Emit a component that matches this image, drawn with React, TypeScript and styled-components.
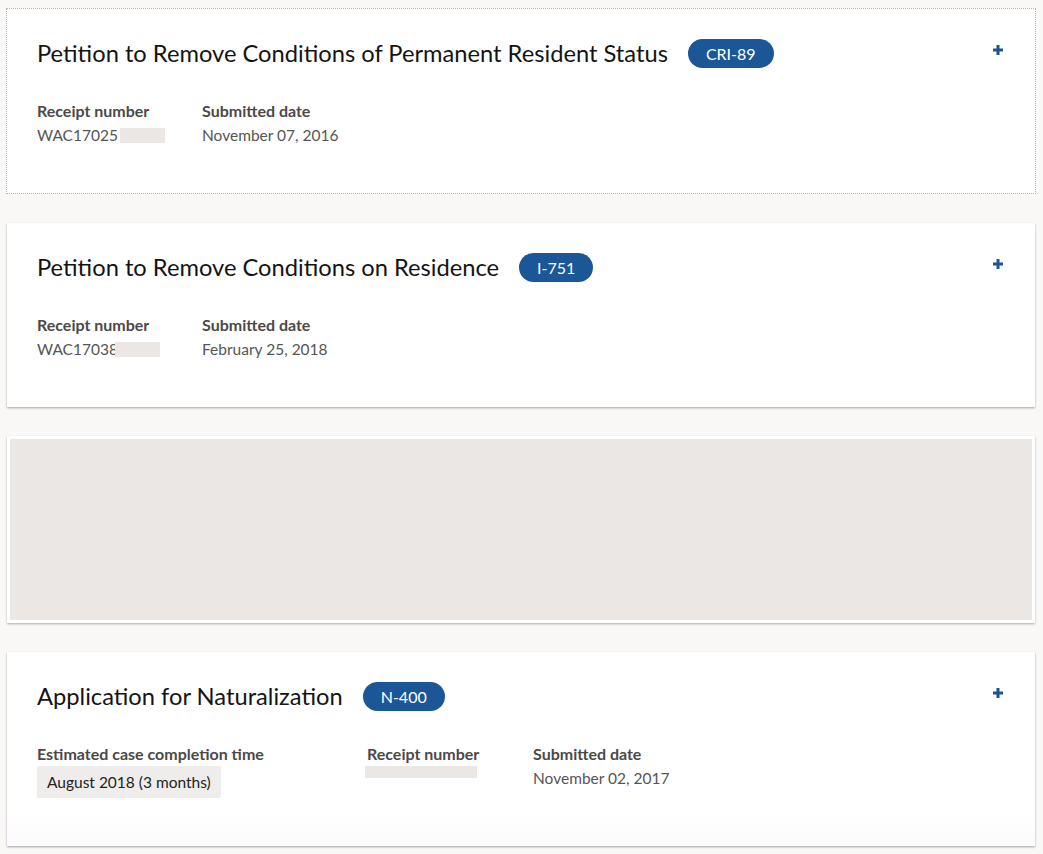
import * as React from 'react'
import styled, { createGlobalStyle } from 'styled-components'

const GlobalStyle = createGlobalStyle`
  html, body {
    margin: 0;
    padding: 0;
    background: #f9f8f6;
    font-family: Lato, "Noto Sans", "Liberation Sans", sans-serif;
  }
`

const Page = styled.div`
  display: flex;
  flex-direction: column;
  gap: 29px;
  padding: 8px 8px 6px 7px;
`

const Card = styled.section<{ $focused?: boolean; $fade?: boolean }>`
  background: ${(p) => (p.$fade ? 'linear-gradient(to bottom, #fff 80%, #fbfbfd 100%)' : '#fff')};
  padding: 30px 31px ${(p) => (p.$fade ? 48 : 46)}px 30px;
  box-shadow: ${(p) => (p.$focused ? 'none' : '0 1px 2px rgba(0, 0, 0, 0.35)')};
  border: ${(p) => (p.$focused ? '1px dotted #b8b4b0' : 'none')};
  margin: ${(p) => (p.$focused ? '0 -1px' : '0')};
`

const Placeholder = styled.div`
  height: 181px;
  background: #ebe7e4;
  border: 3px solid #fff;
  box-shadow: 0 1px 2px rgba(0, 0, 0, 0.3);
`

const Header = styled.div`
  display: flex;
  align-items: center;
  height: 28px;
  margin-bottom: 34px;
`

const Title = styled.h2`
  margin: 0;
  font-size: 23.7px;
  font-weight: 400;
  color: #141414;
  line-height: 28px;
`

const Badge = styled.span`
  display: inline-flex;
  align-items: center;
  height: 29px;
  margin-left: 20px;
  padding: 0 18px;
  border-radius: 15px;
  background: #1b5697;
  color: #fff;
  font-size: 16px;
`

const Toggle = styled.button`
  margin-left: auto;
  border: none;
  background: none;
  padding: 0;
  width: 12px;
  height: 12px;
  display: flex;
  cursor: pointer;
  margin-top: -6px;
`

const Fields = styled.div<{ $cols: string }>`
  display: grid;
  grid-template-columns: ${(p) => p.$cols};
  align-items: start;
`

const Field = styled.div`
  display: flex;
  flex-direction: column;
`

const Label = styled.div`
  font-size: 16px;
  font-weight: 700;
  color: #4d4847;
  line-height: 20px;
  margin-bottom: 2px;
`

const Value = styled.div<{ $shift?: number }>`
  font-size: 15.5px;
  color: #555;
  line-height: 24px;
  display: flex;
  align-items: center;
  margin-left: ${(p) => p.$shift ?? 0}px;
`

const Redacted = styled.span<{ $w: number; $h?: number; $gap?: number }>`
  display: inline-block;
  width: ${(p) => p.$w}px;
  height: ${(p) => p.$h ?? 15}px;
  margin-left: ${(p) => p.$gap ?? 0}px;
  background: #ebe7e4;
`

const Estimate = styled.span`
  display: inline-block;
  padding: 4px 10px;
  line-height: 24px;
  height: 32px;
  box-sizing: border-box;
  background: #efedeb;
  color: #222;
  border-radius: 2px;
`

const Plus = () => (
  <svg width="12" height="12" viewBox="0 0 12 12">
    <path d="M6 1v10M1 6h10" stroke="#1d5495" strokeWidth="3" />
  </svg>
)

type CaseProps = {
  title: string
  badge: string
  focused?: boolean
  fade?: boolean
  cols: string
  children: React.ReactNode
}

const CaseCard = ({ title, badge, focused, fade, cols, children }: CaseProps) => (
  <Card $focused={focused} $fade={fade}>
    <Header>
      <Title>{title}</Title>
      <Badge>{badge}</Badge>
      <Toggle aria-label="Expand">
        <Plus />
      </Toggle>
    </Header>
    <Fields $cols={cols}>{children}</Fields>
  </Card>
)

export default function App() {
  return (
    <Page>
      <GlobalStyle />
      <CaseCard
        focused
        title="Petition to Remove Conditions of Permanent Resident Status"
        badge="CRI-89"
        cols="165px 1fr"
      >
        <Field>
          <Label>Receipt number</Label>
          <Value>
            WAC17025<Redacted $w={45} $gap={2} />
          </Value>
        </Field>
        <Field>
          <Label>Submitted date</Label>
          <Value>November 07, 2016</Value>
        </Field>
      </CaseCard>

      <CaseCard title="Petition to Remove Conditions on Residence" badge="I-751" cols="165px 1fr">
        <Field>
          <Label>Receipt number</Label>
          <Value>
            WAC17038<Redacted $w={45} $gap={-3} />
          </Value>
        </Field>
        <Field>
          <Label>Submitted date</Label>
          <Value>February 25, 2018</Value>
        </Field>
      </CaseCard>

      <Placeholder />

      <CaseCard fade title="Application for Naturalization" badge="N-400" cols="330px 166px 1fr">
        <Field>
          <Label>Estimated case completion time</Label>
          <Value>
            <Estimate>August 2018 (3 months)</Estimate>
          </Value>
        </Field>
        <Field>
          <Label>Receipt number</Label>
          <Value $shift={-2}>
            <Redacted $w={112} $h={12} />
          </Value>
        </Field>
        <Field>
          <Label>Submitted date</Label>
          <Value>November 02, 2017</Value>
        </Field>
      </CaseCard>
    </Page>
  )
}
